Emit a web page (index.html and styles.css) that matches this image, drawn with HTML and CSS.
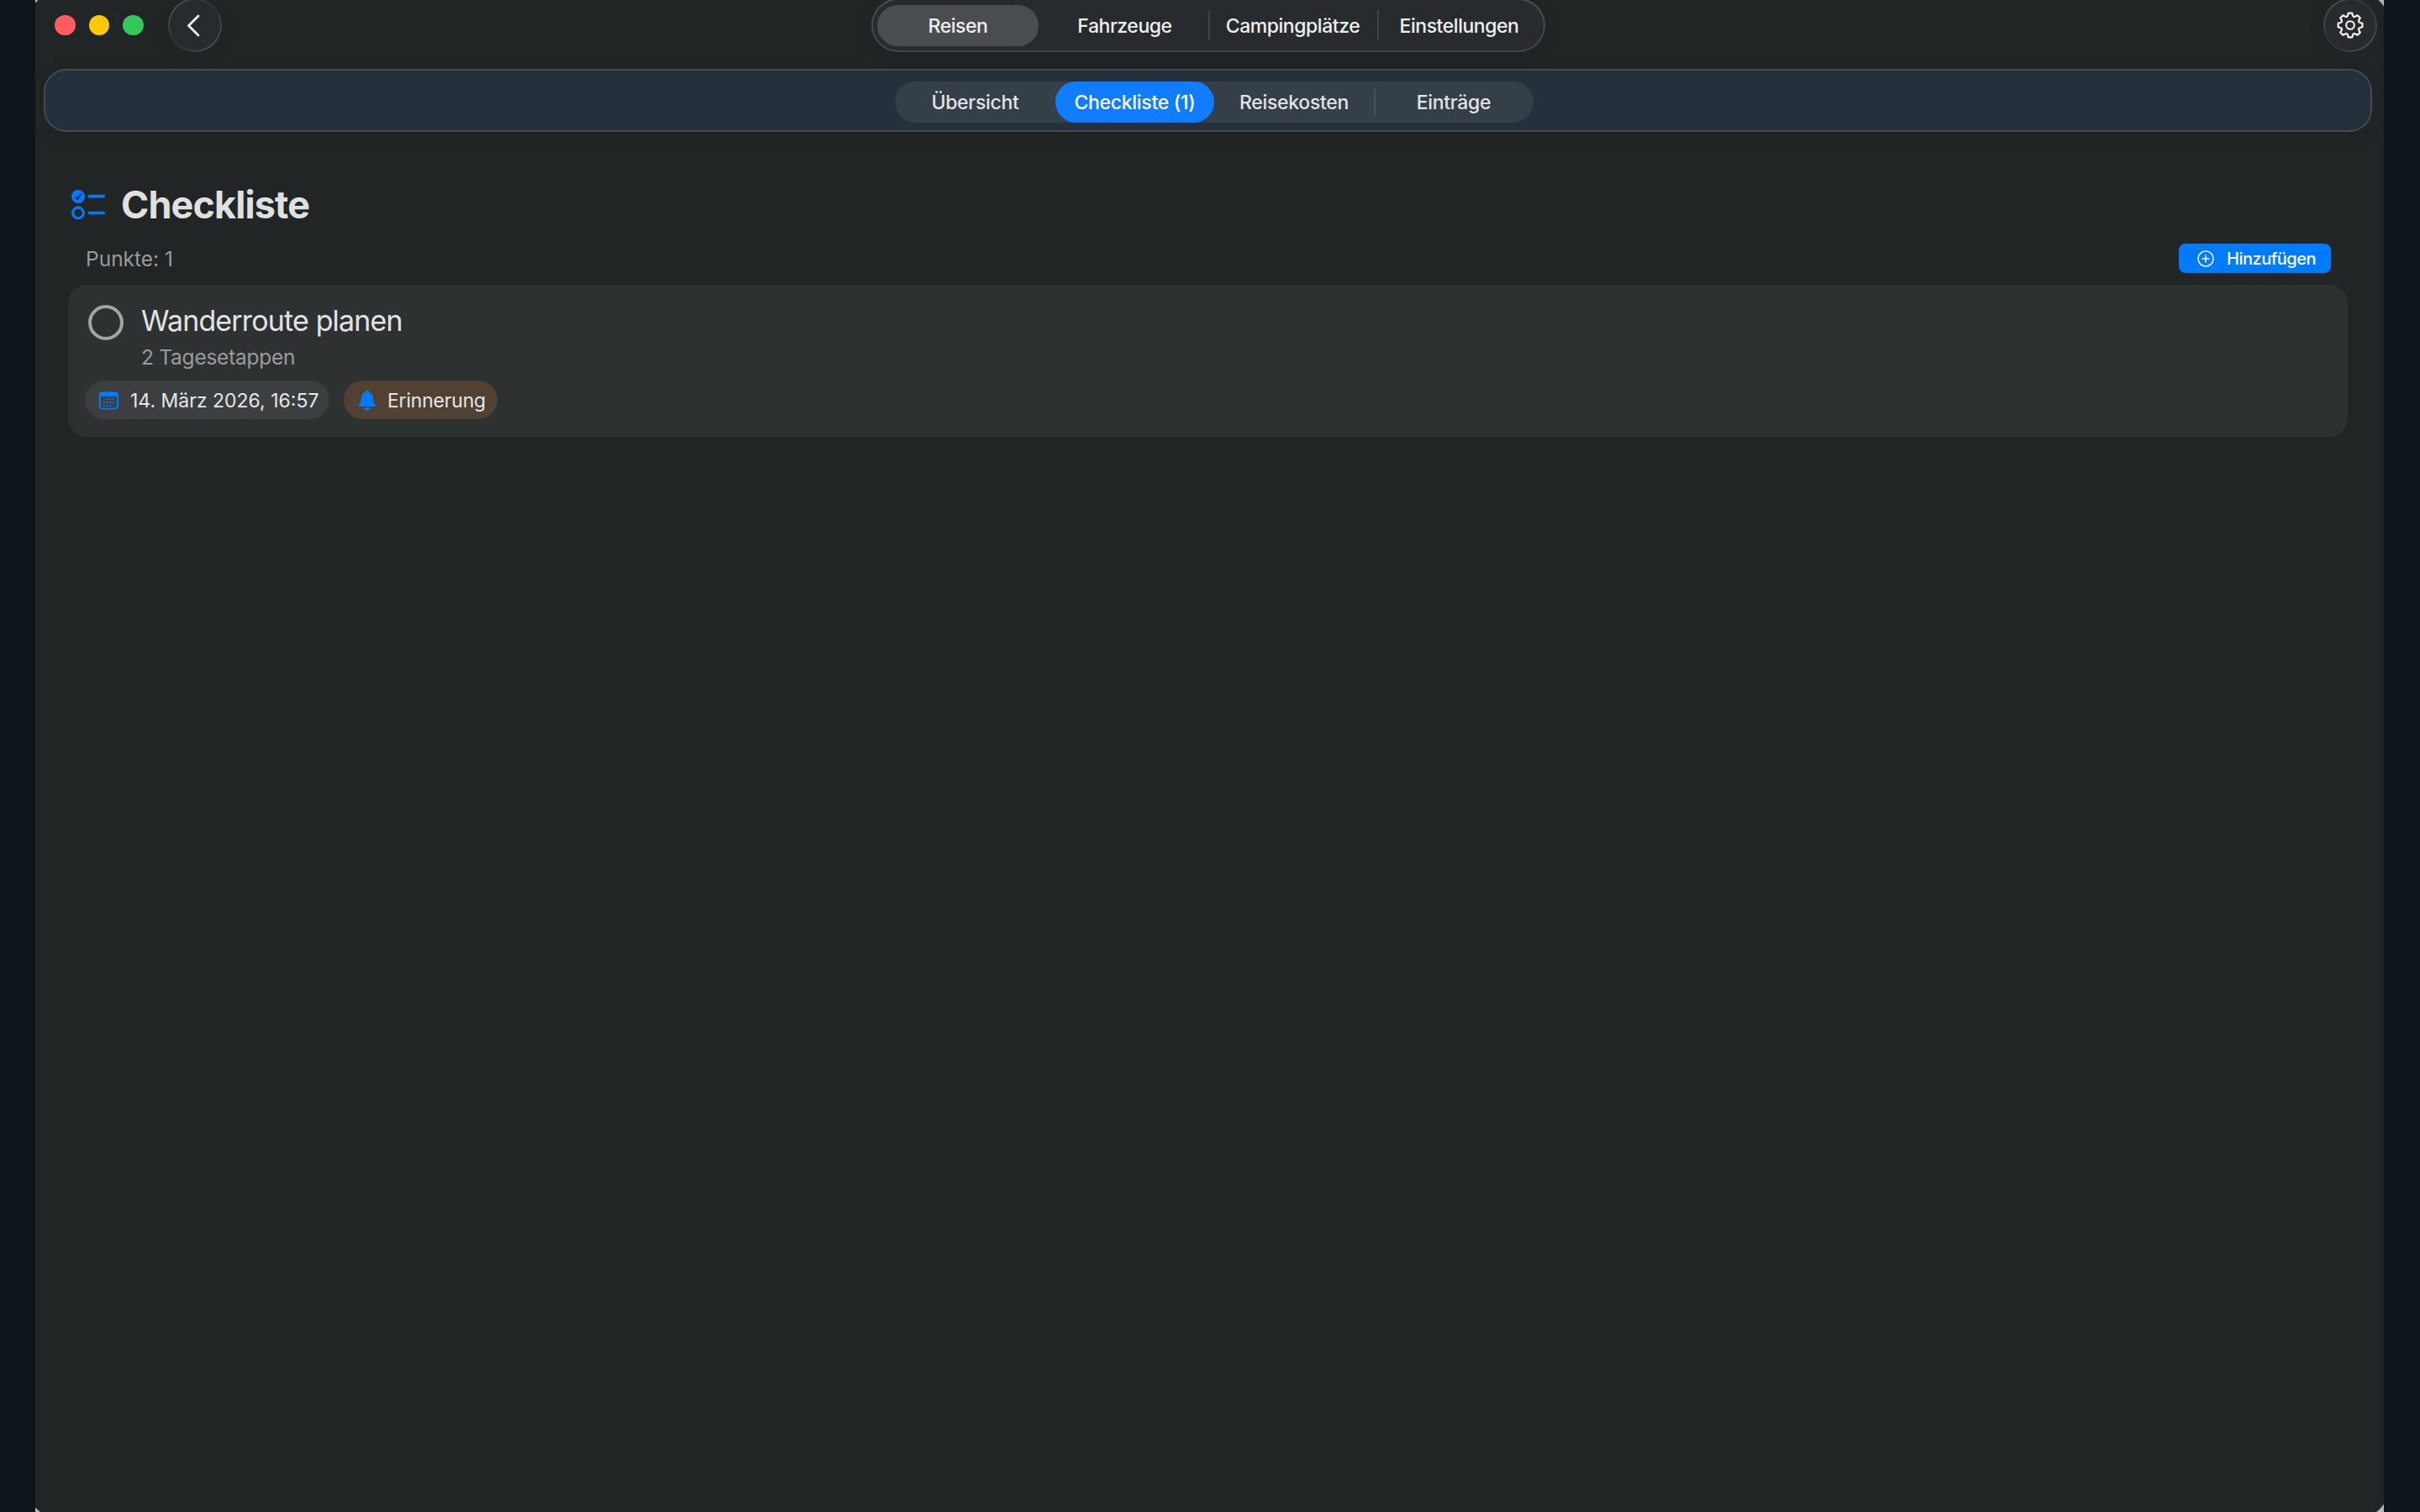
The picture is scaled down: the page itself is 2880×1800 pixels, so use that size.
FILE: index.html
```html
<!DOCTYPE html>
<html lang="de">

<head>
    <meta charset="UTF-8">
    <meta name="viewport" content="width=device-width, initial-scale=1.0">
    <title>Checkliste</title>
    <link rel="stylesheet" href="styles.css">
</head>

<body>
    <div class="backdrop">
        <div class="window">
            <header class="titlebar">
                <div class="left">
                    <div class="lights">
                        <span class="light red"></span>
                        <span class="light yellow"></span>
                        <span class="light green"></span>
                    </div>
                    <button class="round-btn" aria-label="Zurück">
                        <svg width="64" height="64" viewBox="0 0 64 64">
                            <path d="M36 21 L24.5 32.5 L36 44" fill="none" stroke="#f2f3f3" stroke-width="2.8" stroke-linecap="round" stroke-linejoin="round" />
                        </svg>
                    </button>
                </div>

                <nav class="tabs">
                    <a class="tab active">Reisen</a>
                    <a class="tab">Fahrzeuge</a>
                    <a class="tab line">Campingplätze</a>
                    <a class="tab line">Einstellungen</a>
                </nav>

                <button class="round-btn" aria-label="Einstellungen">
                    <svg width="64" height="64" viewBox="-32 -32 64 64">
                        <path d="M-2.2 -14.4 H2.2 L3.2 -11.2 Q3.95 -9.5 5.66 -10.18 L8.63 -11.74 L11.74 -8.63 L10.18 -5.66 Q9.5 -3.95 11.2 -3.2 L14.4 -2.2 V2.2 L11.2 3.2 Q9.5 3.95 10.18 5.66 L11.74 8.63 L8.63 11.74 L5.66 10.18 Q3.95 9.5 3.2 11.2 L2.2 14.4 H-2.2 L-3.2 11.2 Q-3.95 9.5 -5.66 10.18 L-8.63 11.74 L-11.74 8.63 L-10.18 5.66 Q-9.5 3.95 -11.2 3.2 L-14.4 2.2 V-2.2 L-11.2 -3.2 Q-9.5 -3.95 -10.18 -5.66 L-11.74 -8.63 L-8.63 -11.74 L-5.66 -10.18 Q-3.95 -9.5 -3.2 -11.2 Z" fill="none" stroke="#f2f3f3" stroke-width="2.2" stroke-linejoin="round" />
                        <circle r="4.8" fill="none" stroke="#f2f3f3" stroke-width="2.1" />
                    </svg>
                </button>
            </header>

            <div class="subbar">
                <nav class="segments">
                    <a class="segment">Übersicht</a>
                    <a class="segment active">Checkliste (1)</a>
                    <a class="segment">Reisekosten</a>
                    <a class="segment line">Einträge</a>
                </nav>
            </div>

            <main class="content">
                <div class="heading">
                    <svg width="42" height="36" viewBox="0 0 42 36">
                        <circle cx="9" cy="8" r="8" fill="#007aff" />
                        <path d="M5.6 8.6 L8 11.2 L12.2 5" fill="none" stroke="#222526" stroke-width="1.8" stroke-linecap="round" stroke-linejoin="round" />
                        <circle cx="9" cy="27.5" r="6.3" fill="none" stroke="#007aff" stroke-width="3.2" />
                        <path d="M22.3 7.7 H39.3 M22.3 27.5 H39.3" stroke="#007aff" stroke-width="3.7" stroke-linecap="round" />
                    </svg>
                    <h1>Checkliste</h1>
                </div>

                <div class="meta">
                    <p class="count">Punkte: 1</p>
                    <button class="add">
                        <svg width="22" height="22" viewBox="0 0 22 22">
                            <circle cx="11" cy="11" r="9" fill="none" stroke="#fff" stroke-width="1.5" />
                            <path d="M11 7 V15 M7 11 H15" stroke="#fff" stroke-width="1.5" stroke-linecap="round" />
                        </svg>
                        <span>Hinzufügen</span>
                    </button>
                </div>

                <section class="card">
                    <div class="item">
                        <span class="check"></span>
                        <div class="texts">
                            <h2>Wanderroute planen</h2>
                            <p class="note">2 Tagesetappen</p>
                        </div>
                    </div>
                    <div class="chips">
                        <div class="chip date">
                            <svg width="24" height="24" viewBox="0 0 24 24">
                                <rect x="1.9" y="2.6" width="21" height="19" rx="3" fill="none" stroke="#007aff" stroke-width="1.8" />
                                <path d="M1 7 V5 Q1 1.6 4.4 1.6 H20.4 Q23.8 1.6 23.8 5 V7 Z" fill="#007aff" />
                                <path d="M9.5 10.2 H19 M5.8 14 H19 M5.8 17.8 H15.3" stroke="#007aff" stroke-width="1.8" stroke-dasharray="2 1.7" />
                            </svg>
                            <span>14. März 2026, 16:57</span>
                        </div>
                        <div class="chip reminder">
                            <svg width="22" height="24" viewBox="0 0 22 24">
                                <path d="M11 0 C12.6 0 13.6 .9 13.9 2.2 C16.6 3.3 17.9 5.8 18.1 9 C18.3 13.2 19 14.8 20.6 16.4 C21.8 17.7 21.3 19 19.8 19 H2.2 C.7 19 .2 17.7 1.4 16.4 C3 14.8 3.7 13.2 3.9 9 C4.1 5.8 5.4 3.3 8.1 2.2 C8.4 .9 9.4 0 11 0 Z M7.2 20.6 H14.8 C14.4 22.4 13 23.6 11 23.6 C9 23.6 7.6 22.4 7.2 20.6 Z" fill="#007aff" />
                            </svg>
                            <span>Erinnerung</span>
                        </div>
                    </div>
                </section>
            </main>
        </div>
    </div>
</body>

</html>
```
FILE: styles.css
```css
* {
    box-sizing: border-box;
}

body {
    margin: 0;
    font-family: Inter, "Liberation Sans", sans-serif;
    color: #e4e5e5;
    background-color: #0e161d;
}

h1,
h2,
p {
    margin: 0;
}

button {
    padding: 0;
    border: none;
    font-family: inherit;
    color: inherit;
}

svg {
    display: block;
    flex-shrink: 0;
}

/* light desktop shows through at the rounded window corners */
.backdrop {
    width: 2795px;
    height: 1800px;
    margin-left: 42px;
    background-color: #b4b7b9;
    overflow: hidden;
}

.window {
    height: 1800px;
    background-color: #222526;
    clip-path: inset(-10px -7px -8px -10px round 40px);
    overflow: hidden;
}

.titlebar {
    display: grid;
    grid-template-columns: 972px 802px 1fr;
    align-items: center;
    height: 64px;
    margin-top: -2px;
    padding: 0 8px 0 23px;
}

.titlebar > .round-btn {
    justify-self: end;
}

.left {
    display: flex;
    align-items: center;
    gap: 29px;
}

.lights {
    display: flex;
    gap: 16px;
}

.light {
    width: 24.5px;
    height: 24.5px;
    border-radius: 50%;
}

.red {
    background-color: #ff5d60;
}

.yellow {
    background-color: #fbc905;
}

.green {
    background-color: #34c85a;
}

.round-btn {
    width: 64px;
    height: 64px;
    border: 2px solid transparent;
    border-radius: 50%;
    background: linear-gradient(#282b2d, #282b2d) padding-box, linear-gradient(135deg, #465052 10%, #303536 45%, #303536 55%, #465052 90%) border-box;
    box-shadow: 0 6px 24px rgba(0, 0, 0, 0.06);
}

.round-btn svg {
    margin: -2px;
}

.tabs {
    display: grid;
    grid-template-columns: 195px 199px 201px 195px;
    align-items: center;
    height: 64px;
    padding: 0 4px 0 5px;
    border: 2px solid transparent;
    border-radius: 32px;
    background: linear-gradient(#282b2d, #282b2d) padding-box, linear-gradient(#465052, #3e4748) border-box;
    box-shadow: 0 6px 24px rgba(0, 0, 0, 0.08);
    font-size: 23px;
    font-weight: 500;
    letter-spacing: -0.45px;
    color: #eeefef;
}

.tab,
.segment {
    display: flex;
    justify-content: center;
    align-items: center;
    height: 49px;
    padding-top: 1px;
}

.tab.active {
    width: 192px;
    border-radius: 25px;
    background-color: #4a4d4f;
}

.line {
    background: linear-gradient(#3d4243, #3d4243) no-repeat left center / 2px 36px;
}

.subbar {
    display: flex;
    justify-content: center;
    align-items: center;
    width: 2771px;
    height: 75px;
    margin: 20px 0 0 10px;
    border: 2px solid #454b4e;
    border-radius: 27px;
    background-color: #24303b;
    box-shadow: 0 6px 24px rgba(0, 0, 0, 0.06);
}

.segments {
    display: grid;
    grid-template-columns: 191px 189px 190px 190px;
    height: 49px;
    margin: 3px 0 0 15px;
    border-radius: 25px;
    background-color: #353f48;
    font-size: 23px;
    font-weight: 500;
    letter-spacing: -0.3px;
    color: #e1e3e4;
}

.segment.active {
    border-radius: 25px;
    background-color: #107dff;
    color: #ffffff;
}

.segment.line {
    background: linear-gradient(#4a535b, #4a535b) no-repeat left center / 2px 32px;
}

.content {
    width: 2713px;
    margin: 60px 0 0 39px;
}

.heading {
    display: flex;
    align-items: center;
    gap: 18px;
    height: 54px;
    padding-left: 3px;
}

h1 {
    font-size: 45px;
    font-weight: 700;
    line-height: 54px;
    letter-spacing: -0.9px;
    color: #dfe0e0;
}

.meta {
    display: flex;
    justify-content: space-between;
    align-items: center;
    height: 35px;
    margin: 19px 20px 14px 21px;
}

.count,
.note {
    font-size: 24.5px;
    color: #999b9b;
}

.count {
    padding-top: 1px;
}

.add {
    display: flex;
    align-items: center;
    gap: 14px;
    width: 181px;
    height: 35px;
    padding-left: 21px;
    border-radius: 8px;
    background-color: #007aff;
    font-size: 20px;
    font-weight: 500;
    letter-spacing: -0.5px;
    color: #ffffff;
}

.card {
    height: 181px;
    padding: 22px 20px;
    border-radius: 22px;
    background-color: #2e3132;
}

.item {
    display: flex;
    gap: 21px;
    height: 92px;
    padding-left: 4px;
}

.check {
    width: 42px;
    height: 42px;
    margin-top: 2px;
    border: 4px solid #a3a5a5;
    border-radius: 50%;
}

h2 {
    font-size: 34px;
    font-weight: 400;
    line-height: 42px;
    letter-spacing: -0.85px;
    color: #e2e3e3;
}

.note {
    margin-top: 6px;
    line-height: 32px;
    letter-spacing: -0.25px;
}

.chips {
    display: flex;
    gap: 17px;
}

.chip {
    display: flex;
    align-items: center;
    height: 46px;
    padding-top: 1px;
    border-radius: 23px;
    font-size: 23px;
    font-weight: 400;
    color: #e6e7e7;
}

.date {
    gap: 14px;
    width: 291px;
    padding-left: 16px;
    background-color: #3c3f40;
}

.reminder {
    gap: 13px;
    width: 183px;
    padding-left: 17px;
    background-color: #514132;
    letter-spacing: -0.2px;
}
```
